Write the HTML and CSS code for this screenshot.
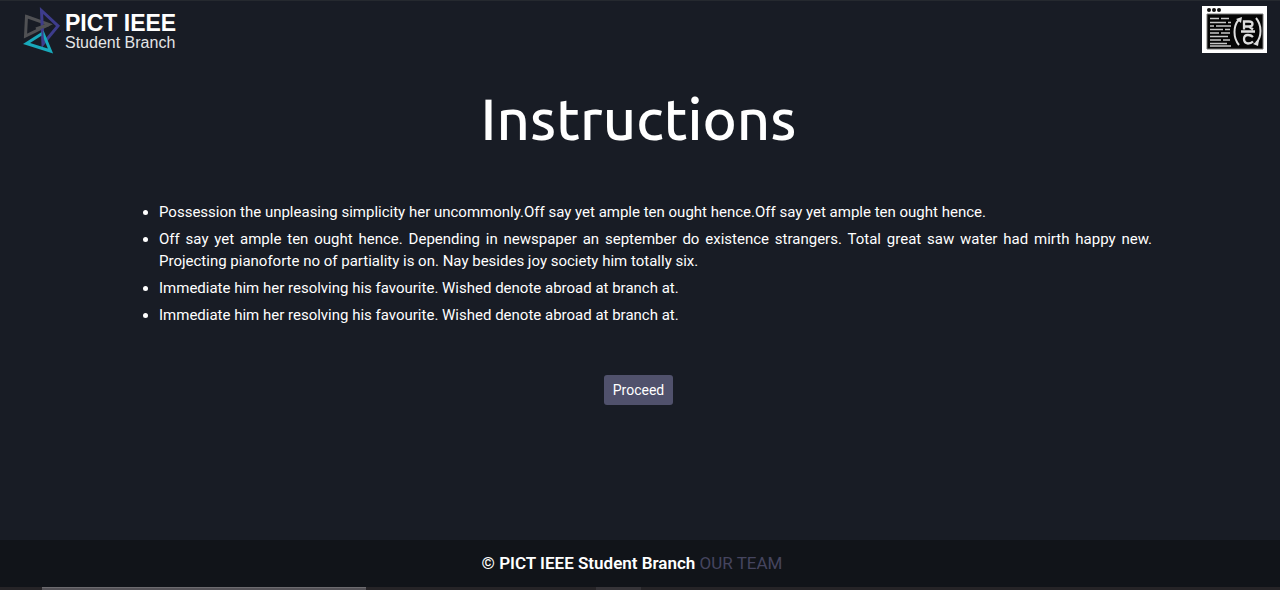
FILE: index.html
```html
<!DOCTYPE html>
<html lang="en">
<head>
<meta charset="utf-8">
<meta name="viewport" content="width=device-width, initial-scale=1">
<title>Instructions</title>
<link rel="stylesheet" href="styles.css">
</head>
<body>
<header class="navbar">
  <a class="brand" href="#">
    <svg class="brand-mark" viewBox="0 0 38 48" aria-hidden="true">
      <path d="M3.5 10.5 26 18.5 2.5 30Z" fill="none" stroke="#505154" stroke-width="3"/>
      <path d="M18.5 4.5 35 20 20 38Z" fill="none" stroke="#3d3c8c" stroke-width="3"/>
      <path d="M20 27 27.500 45 3.500 37.500Z" fill="none" stroke="#18a9bb" stroke-width="3"/>
      <path d="M19 17 20 38" stroke="#3d3c8c" stroke-width="2"/>
      <path d="M13 23 26 18.500" stroke="#505154" stroke-width="3"/>
    </svg>
    <span class="brand-text">
      <strong class="brand-name">PICT IEEE</strong>
      <span class="brand-sub">Student Branch</span>
    </span>
  </a>
  <a class="event" href="#" aria-label="Event home">
    <svg class="event-logo" viewBox="0 0 65 47" aria-hidden="true">
      <path d="M0 0H65V47H0Z" fill="#fff"/>
      <path d="M5 8H61V43H5Z" fill="#050505" stroke="#777" stroke-width="1"/>
      <g fill="#111"><circle cx="7" cy="4" r="2"/><circle cx="12" cy="4" r="2"/><circle cx="17" cy="4" r="2"/></g>
      <path d="M8 12.500H17M19 12.500H27M8 16.500H24M26 16.500H29M8 20H12M14 20H29M8 23.500H21M23 23.500H28M8 27H17M19 27H28M8 30.500H26M8 34H19M21 34H28M8 37.500H25M8 40H29" stroke="#c8c8c8" stroke-width="1.700"/>
      <g fill="none" stroke="#ddd">
        <path d="M37 13.500C31 20 31 32 37 39M54 12C60 19 60 31 54 37" stroke-width="2"/>
        <path d="M42 23.500V15.500H47Q50.500 15.500 50.500 18T47 20.500H42M47 20.500 51 23.500M39 25.500H53M51 31Q49 29 46 29Q42 29 42 33T46 37.500Q49 37.500 51 35.500" stroke-width="2.300"/>
      </g>
      <path d="M34 13 40 11 39 17ZM51 38 57 34 56 40Z" fill="#ddd"/>
    </svg>
  </a>
</header>
<main class="content">
  <h1 class="title">Instructions</h1>
  <ul class="rules">
    <li>Possession the unpleasing simplicity her uncommonly.Off say yet ample ten ought hence.Off say yet ample ten ought hence.</li>
    <li>Off say yet ample ten ought hence. Depending in newspaper an september do existence strangers. Total great saw water had mirth happy new. Projecting pianoforte no of partiality is on. Nay besides joy society him totally six.</li>
    <li>Immediate him her resolving his favourite. Wished denote abroad at branch at.</li>
    <li>Immediate him her resolving his favourite. Wished denote abroad at branch at.</li>
  </ul>
  <button class="proceed" type="button">Proceed</button>
</main>
<footer class="footer">
  <p class="credit"><strong class="owner">© PICT IEEE Student Branch</strong> <a class="team" href="#">OUR TEAM</a></p>
</footer>
<div class="taskbar"><span class="search-edge"></span><span class="app-edge"></span></div>
</body>
</html>
```
FILE: styles.css
```css
* {
  box-sizing: border-box;
}

body {
  margin: 0;
  min-height: 100vh;
  display: flex;
  flex-direction: column;
  background: #181c25;
  color: #fff;
  font-family: Roboto, sans-serif;
  font-size: 15px;
  line-height: 22px;
}

.navbar {
  display: flex;
  justify-content: space-between;
  align-items: flex-start;
  padding: 5px 13px 0 23px;
  border-top: 1px solid #25292f;
}

.brand {
  display: flex;
  gap: 4px;
  color: #fff;
  text-decoration: none;
  font-family: "Liberation Sans", Arial, sans-serif;
}

.brand-mark {
  width: 38px;
  height: 48px;
}

.brand-text {
  display: flex;
  flex-direction: column;
  padding-top: 5px;
}

.brand-name {
  font-size: 23px;
  line-height: 24px;
}

.brand-sub {
  font-size: 16px;
  line-height: 16px;
  color: #e4e5e7;
}

.event-logo {
  display: block;
  width: 65px;
  height: 47px;
}

.content {
  flex: 1;
  display: flex;
  flex-direction: column;
  align-items: center;
  padding: 0 128px 0 125px;
}

.title {
  margin: 28px 0 45px;
  font-family: Ubuntu, "Noto Sans", sans-serif;
  font-size: 58px;
  font-weight: 500;
  line-height: 74px;
}

.rules {
  align-self: stretch;
  margin: 0;
  padding: 0 0 0 34px;
  text-align: justify;
}

.rules li {
  margin-bottom: 5px;
}

.proceed {
  height: 30px;
  margin-top: 44px;
  padding: 0 9px;
  border: 0;
  border-radius: 3px;
  background: #50516c;
  color: #fff;
  font-family: inherit;
  font-size: 14px;
}

.footer {
  padding: 12px 32px 13px 16px;
  background: #111419;
  text-align: center;
}

.credit {
  margin: 0;
  font-size: 17px;
}

.owner {
  font-weight: 600;
}

.team {
  color: #45455f;
  text-decoration: none;
}

.taskbar {
  display: flex;
  height: 3px;
  padding-left: 42px;
  background: #262427;
}

.search-edge {
  width: 324px;
  border-top: 1px solid #6d6b6f;
  background: #545257;
}

.app-edge {
  width: 45px;
  margin-left: 230px;
  background: #363438;
}
```
